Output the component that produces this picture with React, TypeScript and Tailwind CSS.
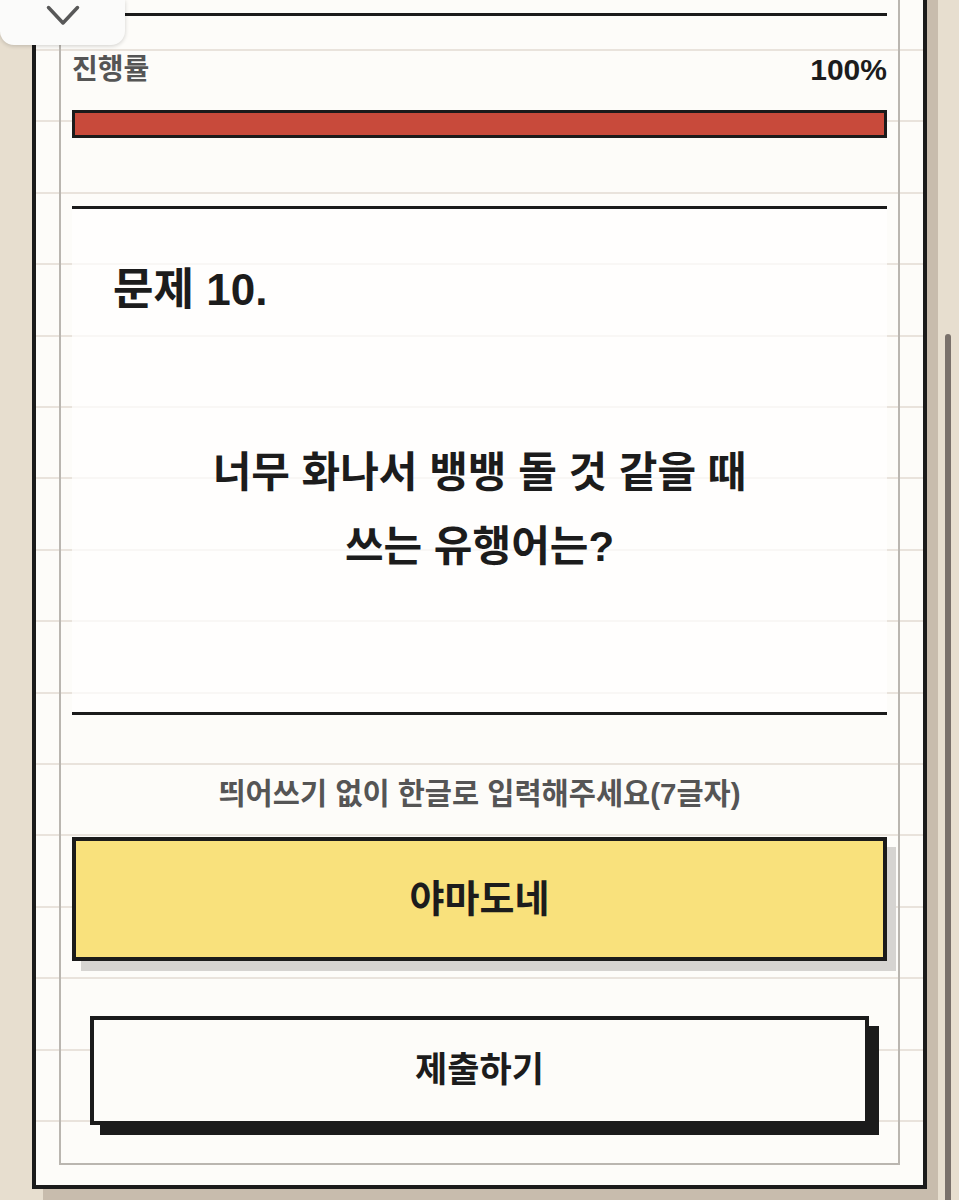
import React from 'react';

const font = 'font-["Liberation_Sans","Noto_Sans_CJK_KR",sans-serif]';

function ChevronTab() {
  return (
    <div className="absolute left-0 top-0 w-[125px] h-[45px] bg-[#fbfbfa] rounded-b-[14px] shadow-[0_1px_4px_rgba(0,0,0,0.18)] flex justify-center pt-[5px]">
      <svg width="34" height="22" viewBox="0 0 34 22" fill="none">
        <path d="M2.5 2.5 L17 18 L31.5 2.5" stroke="#585858" strokeWidth="3.5" strokeLinecap="round" strokeLinejoin="round" />
      </svg>
    </div>
  );
}

export default function App() {
  const progress = 100;

  return (
    <div className={`relative h-[1200px] overflow-hidden bg-[#e7decf] ${font}`}>
      <div className="ml-8 -mt-[12px] w-[895px] h-[1201px] border-x-4 border-b-4 border-[#1b1b1b] bg-[#fdfcf9] bg-[repeating-linear-gradient(180deg,transparent_0px,transparent_61px,#e9e3dc_61px,#e9e3dc_63px,transparent_63px,transparent_71.4px)] shadow-[11px_11px_0_#c8bcad] px-[23px] pb-[20px]">
        <div className="h-full border-x-2 border-b-2 border-[#bab6b0] px-[11px] pt-[25px]">
          <div className="h-[3px] bg-[#1b1b1b]" />

          <div className="mt-[38px] flex justify-between items-center h-[31px] font-bold">
            <span className="text-[28px] text-[#555]">진행률</span>
            <span className="text-[30px] text-[#1c1c1c]">{progress}%</span>
          </div>

          <div className="mt-[25px] h-[28px] border-[3px] border-[#1b1b1b] bg-[#fdfcf9]">
            <div className="h-full bg-[#c84a3b]" style={{ width: `${progress}%` }} />
          </div>

          <div className="mt-[68px] h-[3px] bg-[#1b1b1b]" />

          <div className="bg-white/70">
            <div className="pt-[55px] pl-[41px] text-[44px] leading-[52px] font-bold text-[#1c1c1c]">
              문제 10.
            </div>
            <div className="mt-[120px] pb-[128px] text-center text-[42px] leading-[74px] font-bold text-[#1c1c1c]">
              너무 화나서 뱅뱅 돌 것 같을 때
              <br />
              쓰는 유행어는?
            </div>
          </div>

          <div className="h-[3px] bg-[#1b1b1b]" />

          <div className="mt-[62px] text-center text-[29.5px] leading-[34px] font-bold text-[#555]">
            띄어쓰기 없이 한글로 입력해주세요(7글자)
          </div>

          <div className="mt-[26px] h-[124px] border-4 border-[#1b1b1b] bg-[#f9e17c] shadow-[9px_10px_0_#d6d4d1] flex items-center justify-center text-[38px] font-bold text-[#1c1c1c]">
            야마도네
          </div>

          <button className="mt-[55px] mx-[18px] w-[779px] h-[109px] border-4 border-[#1b1b1b] bg-[#fdfcf9] shadow-[10px_10px_0_#1b1b1b] flex items-center justify-center text-[35px] font-bold text-[#1c1c1c]">
            제출하기
          </button>
        </div>
      </div>

      <ChevronTab />
      <div className="absolute left-[945px] top-[334px] w-[6px] h-[880px] rounded-full bg-[#7a716b]" />
    </div>
  );
}
